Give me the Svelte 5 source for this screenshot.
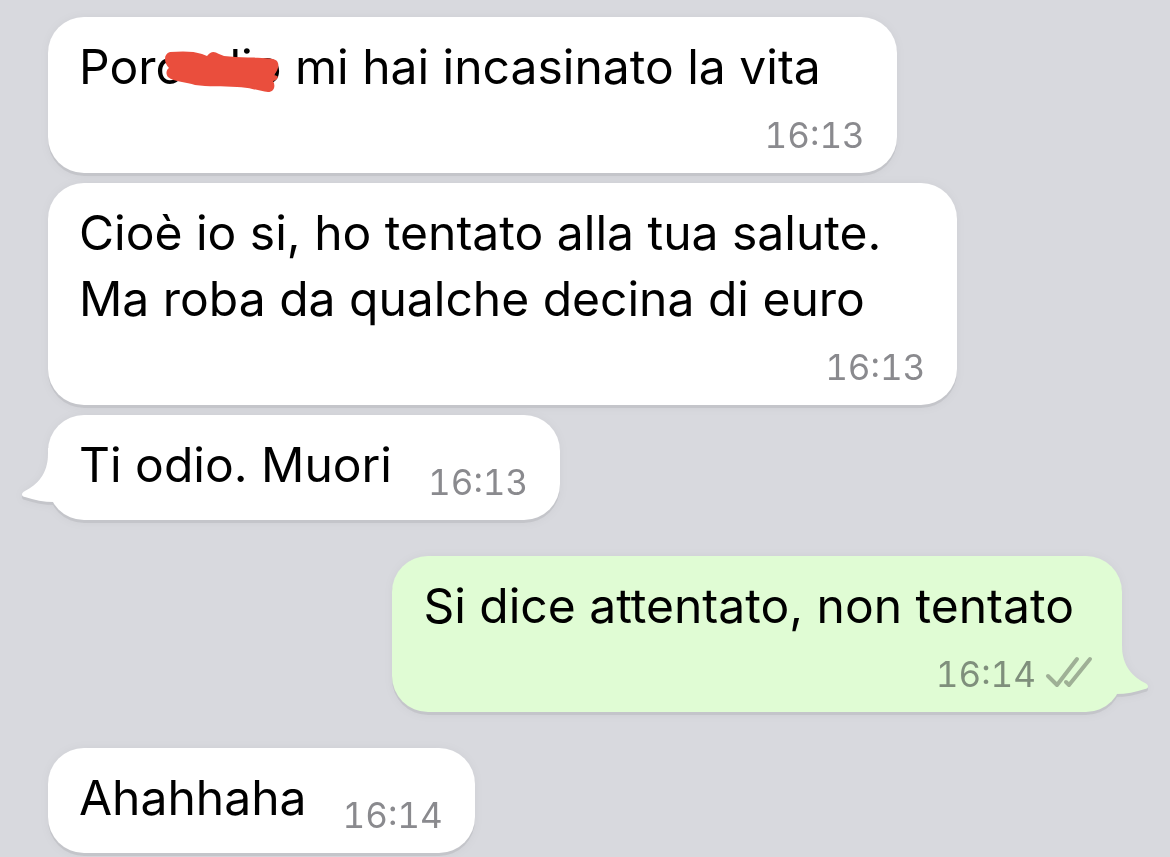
<script lang="ts">
	type Message = {
		text: string;
		time: string;
		mine?: boolean;
		inline?: boolean;
		tail?: boolean;
		last?: boolean;
		scribble?: boolean;
	};

	const messages: Message[] = [
		{ text: 'Porcodio mi hai incasinato la vita', time: '16:13', scribble: true },
		{ text: 'Cioè io si, ho tentato alla tua salute.\nMa roba da qualche decina di euro', time: '16:13' },
		{ text: 'Ti odio. Muori', time: '16:13', inline: true, tail: true, last: true },
		{ text: 'Si dice attentato, non tentato', time: '16:14', mine: true, tail: true, last: true },
		{ text: 'Ahahhaha', time: '16:14', inline: true }
	];
</script>

<main class="chat">
	{#each messages as message}
		<article
			class="bubble"
			class:mine={message.mine}
			class:inline={message.inline}
			class:last={message.last}
		>
			{#if message.tail}
				<svg class="tail" viewBox="0 0 56 60" aria-hidden="true">
					<path d="M26 0V6C26 26 15 37 3 43C-1 45 -1 48 3 49C12 52 22 54 32 54C38 58 45 60 56 60V0Z" />
				</svg>
			{/if}
			<p class="text">{message.text}</p>
			<footer class="meta">
				<time>{message.time}</time>
				{#if message.mine}
					<svg class="checks" viewBox="0 0 46 32" role="img" aria-label="Delivered">
						<path d="M4 18L13 27L33 1M22 24L25 27L46 1" />
					</svg>
				{/if}
			</footer>
			{#if message.scribble}
				<svg class="scribble" viewBox="0 0 116 42" aria-hidden="true">
					<path
						d="M6 1C18 0 30 0 38 3L43 5C47 0 50 0 55 3L60 5C76 7 96 6 109 8C117 10 115 18 110 24C117 25 113 29 109 30C112 35 110 41 104 41C94 40 85 36 73 36C58 35 44 36 31 34C23 31 10 31 4 26C1 22 3 18 5 17C0 12 -1 3 6 1Z"
					/>
				</svg>
			{/if}
		</article>
	{/each}
</main>

<style>
	:global(body) {
		margin: 0;
		background: #d8d9de;
	}

	.chat {
		display: flex;
		flex-direction: column;
		align-items: flex-start;
		gap: 10px;
		padding: 17px 48px 4px;
		font-family: Inter, 'Liberation Sans', sans-serif;
	}

	.bubble {
		position: relative;
		display: flex;
		flex-direction: column;
		gap: 19px;
		padding: 17px 32px 22px 31px;
		border-radius: 36px;
		background: #fff;
		color: #000;
		filter: drop-shadow(0 3px 0 #c4c5ca) drop-shadow(0 0 4px rgba(0, 0, 0, 0.04));
	}
	.bubble.inline {
		flex-direction: row;
		align-items: flex-end;
		gap: 36px;
	}
	.bubble.last {
		margin-bottom: 26px;
	}
	.bubble.mine {
		align-self: flex-end;
		background: #e0fcd4;
	}

	.text {
		margin: 0;
		padding-right: 44px;
		font-size: 48px;
		line-height: 66px;
		white-space: pre-line;
	}
	.inline .text {
		padding-right: 0;
	}
	.mine .text {
		padding-right: 16px;
	}

	.meta {
		display: flex;
		justify-content: flex-end;
		align-items: center;
		gap: 8px;
		color: #8a8a8e;
		font-size: 35px;
		font-variant-numeric: tabular-nums;
		line-height: 32px;
	}
	.mine .meta {
		color: #7f8f7c;
	}

	.checks {
		width: 46px;
		height: 32px;
		overflow: visible;
		fill: none;
		stroke: #9fb096;
		stroke-width: 4;
		stroke-linecap: round;
		stroke-linejoin: round;
	}

	.tail {
		position: absolute;
		left: -26px;
		bottom: 12px;
		width: 56px;
		height: 60px;
		fill: #fff;
	}
	.mine .tail {
		left: auto;
		right: -26px;
		fill: #e0fcd4;
		transform: scaleX(-1);
	}

	.scribble {
		position: absolute;
		top: 34px;
		left: 116px;
		width: 116px;
		height: 42px;
		fill: #ea4e3d;
	}
</style>
